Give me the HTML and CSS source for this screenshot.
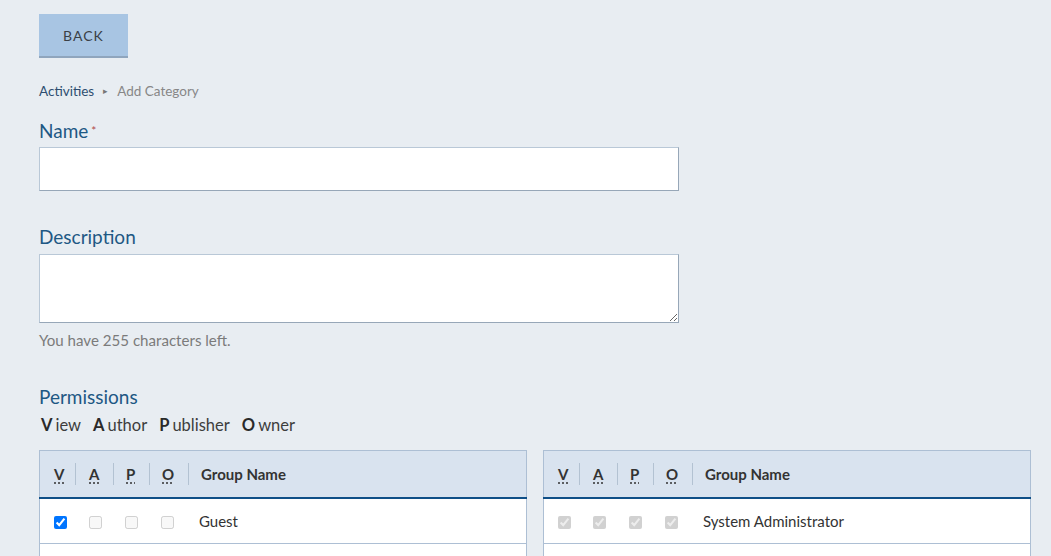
FILE: index.html
```html
<!DOCTYPE html>
<html>
<head>
<meta charset="utf-8">
<link rel="stylesheet" href="styles.css">
</head>
<body>
<div class="page">
  <button class="back">BACK</button>
  <nav class="crumbs"><a class="crumb-link">Activities</a><span class="crumb-sep">&#9656;</span><span class="crumb-current">Add Category</span></nav>

  <div class="field">
    <label class="label">Name<span class="req">*</span></label>
    <input class="input" type="text">
  </div>

  <div class="field field-desc">
    <label class="label">Description</label>
    <textarea class="textarea"></textarea>
    <div class="help">You have 255 characters left.</div>
  </div>

  <div class="perms">
    <div class="label">Permissions</div>
    <div class="legend">
      <span class="lg"><b>V</b>iew</span>
      <span class="lg"><b>A</b>uthor</span>
      <span class="lg"><b>P</b>ublisher</span>
      <span class="lg"><b>O</b>wner</span>
    </div>
    <div class="tables">
      <table class="ptable">
        <thead>
          <tr>
            <th class="c c1"><span class="h first"><abbr>V</abbr></span></th>
            <th class="c c2"><span class="h"><abbr>A</abbr></span></th>
            <th class="c c3"><span class="h"><abbr>P</abbr></span></th>
            <th class="c c4"><span class="h"><abbr>O</abbr></span></th>
            <th class="g"><span class="h">Group Name</span></th>
          </tr>
        </thead>
        <tbody>
          <tr>
            <td class="c c1"><input type="checkbox" checked></td>
            <td class="c c2"><input type="checkbox" disabled></td>
            <td class="c c3"><input type="checkbox" disabled></td>
            <td class="c c4"><input type="checkbox" disabled></td>
            <td class="g">Guest</td>
          </tr>
          <tr><td class="c"></td><td class="c"></td><td class="c"></td><td class="c"></td><td class="g"></td></tr>
        </tbody>
      </table>
      <table class="ptable">
        <thead>
          <tr>
            <th class="c c1"><span class="h first"><abbr>V</abbr></span></th>
            <th class="c c2"><span class="h"><abbr>A</abbr></span></th>
            <th class="c c3"><span class="h"><abbr>P</abbr></span></th>
            <th class="c c4"><span class="h"><abbr>O</abbr></span></th>
            <th class="g"><span class="h">Group Name</span></th>
          </tr>
        </thead>
        <tbody>
          <tr>
            <td class="c c1"><input type="checkbox" checked disabled></td>
            <td class="c c2"><input type="checkbox" checked disabled></td>
            <td class="c c3"><input type="checkbox" checked disabled></td>
            <td class="c c4"><input type="checkbox" checked disabled></td>
            <td class="g">System Administrator</td>
          </tr>
          <tr><td class="c"></td><td class="c"></td><td class="c"></td><td class="c"></td><td class="g"></td></tr>
        </tbody>
      </table>
    </div>
  </div>
</div>
</body>
</html>
```

FILE: styles.css
```css
html, body {
  margin: 0;
  padding: 0;
  background: #e8edf2;
  font-family: Lato, "Open Sans", sans-serif;
  color: #333;
}
.page {
  padding: 14px 20px 0 39px;
}
.back {
  display: block;
  width: 89px;
  height: 44px;
  background: #a8c5e3;
  border: 0;
  border-bottom: 2px solid #8fa5bd;
  font-family: inherit;
  font-size: 14px;
  letter-spacing: 1px;
  color: #3a3f46;
  padding: 0;
}
.crumbs {
  margin-top: 24px;
  font-size: 13.5px;
  line-height: 18px;
  display: flex;
  align-items: center;
}
.crumb-link { color: #2d4d70; }
.crumb-sep { color: #777; font-size: 9px; margin: 0 9px; }
.crumb-current { color: #878787; }
.field { margin-top: 19px; width: 640px; }
.label {
  display: block;
  font-size: 19px;
  line-height: 24px;
  color: #1e5884;
  margin-bottom: 4px;
}
.req { color: #b04a4a; font-size: 12px; vertical-align: top; margin-left: 3px; }
.input {
  display: block;
  box-sizing: border-box;
  width: 640px;
  height: 44px;
  margin: 0;
  background: #fff;
  border: 1px solid #b9c8d7;
  border-bottom-color: #97a7b8;
  border-right-color: #97a7b8;
}
.field-desc { margin-top: 34px; }
.field-desc .label { margin-bottom: 5px; }
.textarea {
  display: block;
  box-sizing: border-box;
  width: 640px;
  height: 69px;
  margin: 0;
  background: #fff;
  border: 1px solid #b9c8d7;
  border-bottom-color: #97a7b8;
  border-right-color: #97a7b8;
}
.help {
  margin-top: 8px;
  font-size: 15.1px;
  line-height: 18px;
  color: #7b7b7b;
}
.perms { margin-top: 36px; }
.perms .label { margin-bottom: 6px; }
.legend {
  display: flex;
  gap: 12px;
  font-size: 16.5px;
  line-height: 20px;
  color: #3d3d3d;
  padding-left: 2px;
}
.legend b { color: #2a2a2a; margin-right: 3px; }
.tables {
  margin-top: 15px;
  display: flex;
  gap: 16px;
}
.ptable {
  width: 488px;
  border-collapse: collapse;
  border: 1px solid #adbfd4;
  border-bottom: 0;
  table-layout: fixed;
}
.ptable thead tr {
  background: #d9e3ef;
  height: 47px;
  border-bottom: 2px solid #0f4f87;
}
.ptable th {
  padding: 0;
  text-align: left;
  font-size: 15px;
  font-weight: 700;
  color: #333;
}
.ptable .c1 { width: 35px; }
.ptable .c2 { width: 38px; }
.ptable .c3 { width: 36px; }
.ptable .c4 { width: 39px; }
.ptable .h {
  display: block;
  border-left: 1px solid #b3c2d2;
  line-height: 22px;
  padding-left: 12px;
}
.ptable .h.first { border-left: 0; padding-left: 14px; }
.ptable .c2 .h { padding-left: 13px; }
.ptable th.g .h { padding-left: 12px; }
abbr {
  text-decoration: underline dotted;
  text-underline-offset: 3px;
}
.ptable tbody tr {
  background: #fff;
  height: 46px;
  border-bottom: 1px solid #adbfd4;
}
.ptable td {
  padding: 0;
  font-size: 15px;
  color: #333;
}
.ptable td.c { padding-left: 12px; }
.ptable td.c1 { padding-left: 14px; }
.ptable td.c2 { padding-left: 14px; }
.ptable td.g { padding-left: 11px; }
.ptable input[type=checkbox] {
  margin: 0;
  width: 13px;
  height: 13px;
  vertical-align: middle;
}
```
